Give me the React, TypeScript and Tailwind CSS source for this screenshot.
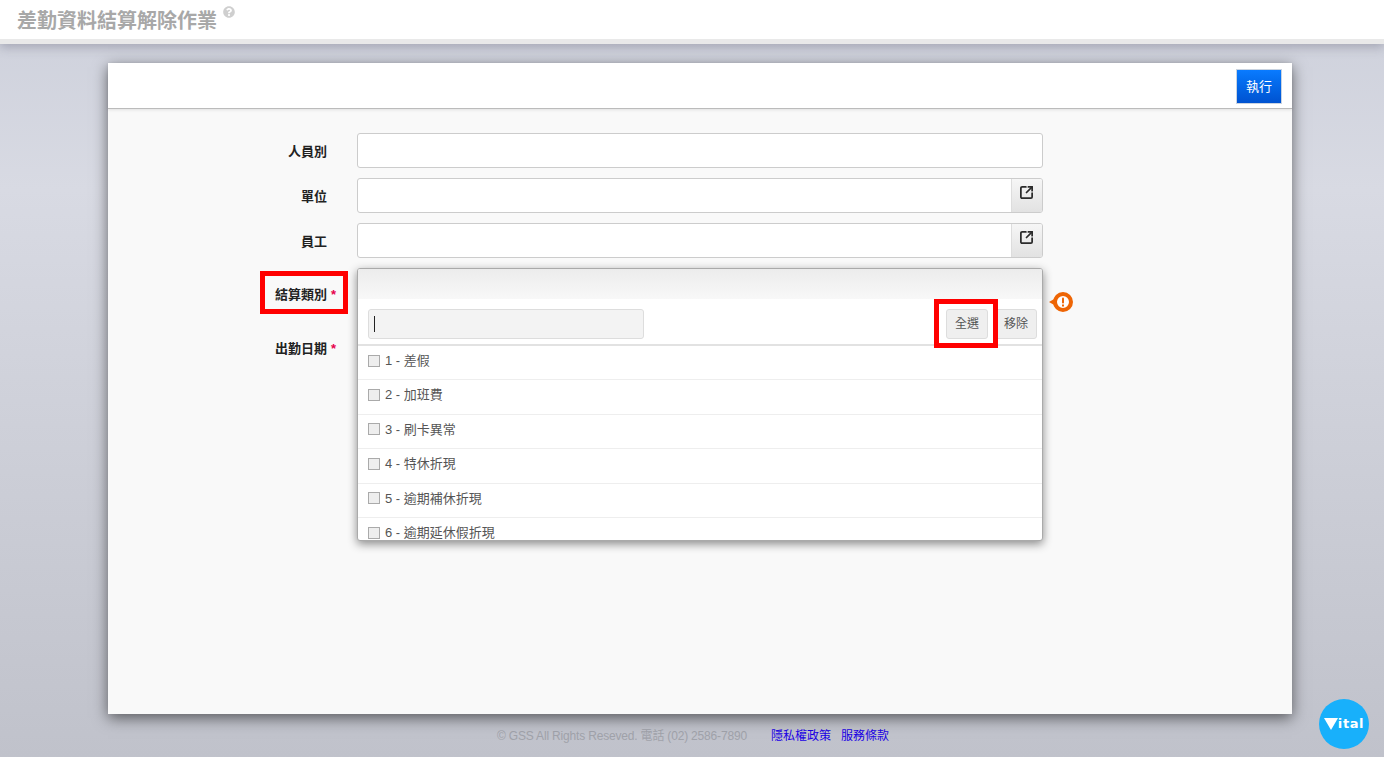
import { FaQuestionCircle } from "react-icons/fa";
import { SquareArrowOutUpRight } from "lucide-react";

const options = [
  "1 - 差假",
  "2 - 加班費",
  "3 - 刷卡異常",
  "4 - 特休折現",
  "5 - 逾期補休折現",
  "6 - 逾期延休假折現",
];

const FieldLabel = ({ text, required }: { text: string; required?: boolean }) => (
  <div className="w-[219px] shrink-0 pt-[2px] flex items-center justify-end text-[13px] font-bold text-[#222]">
    <span>{text}</span>
    {required && <span className="ml-1 -mr-[10px] w-[6px] text-[#e6004c]">*</span>}
  </div>
);

const LookupInput = () => (
  <div className="w-[686px] h-[35px] flex bg-white border border-[#ccc] rounded-[3px] overflow-hidden">
    <div className="flex-1" />
    <div className="w-[31px] flex justify-center pt-[6px] pr-[2px] bg-linear-to-b from-[#f6f6f6] to-[#e2e2e2] border-l border-[#ddd]">
      <SquareArrowOutUpRight size={15} strokeWidth={2.8} className="text-[#2b2b2b]" />
    </div>
  </div>
);

const App = () => {
  return (
    <div className="h-screen overflow-hidden flex flex-col bg-linear-to-b from-[#cdd0db] via-[#d8dae3] via-25% to-[#c0c2cb] font-['Liberation_Sans','Noto_Sans_CJK_TC',sans-serif]">
      {/* Page title */}
      <header className="h-[44px] shrink-0 bg-white border-b-[5px] border-[#e9e9e9] shadow-[0_3px_10px_rgba(80,80,100,0.35)] pl-[17px] flex items-start">
        <h1 className="mt-[8px] text-[20px] leading-[26px] font-bold text-[#a8a8a8]">差勤資料結算解除作業</h1>
        <FaQuestionCircle className="ml-[6px] mt-[6px] text-[#cfcfcf]" size={12} />
      </header>

      {/* Main card */}
      <main className="relative mt-[19px] ml-[108px] w-[1184px] h-[651px] shrink-0 bg-[#f9f9f9] shadow-[0_4px_14px_rgba(0,0,0,0.55)] flex flex-col">
        <div className="h-[46px] shrink-0 bg-white border-b border-[#bbb] shadow-[0_1px_3px_rgba(0,0,0,0.1)] flex items-start justify-end pt-[6px] pr-[10px]">
          <button className="w-[46px] h-[35px] bg-linear-to-b from-[#0a7bff] to-[#0052d0] border border-[#c9d3e0] text-white text-[13px]">
            執行
          </button>
        </div>

        <form className="pt-[24px] flex flex-col gap-[10px]">
          <div className="flex gap-[30px] h-[35px]">
            <FieldLabel text="人員別" />
            <div className="w-[686px] bg-white border border-[#ccc] rounded-[3px]" />
          </div>
          <div className="flex gap-[30px] h-[35px]">
            <FieldLabel text="單位" />
            <LookupInput />
          </div>
          <div className="flex gap-[30px] h-[35px]">
            <FieldLabel text="員工" />
            <LookupInput />
          </div>
          <div className="relative flex gap-[30px] h-[52px]">
            <FieldLabel text="結算類別" required />

            {/* Open multi-select dropdown */}
            <div className="absolute z-10 left-[249px] top-0 w-[686px] h-[273px] flex flex-col bg-white border border-[#aaa] rounded-[3px] shadow-[0_3px_10px_rgba(0,0,0,0.45)] overflow-hidden">
              <div className="h-[30px] shrink-0 bg-linear-to-b from-[#ececec] to-[#f8f8f8]" />
              <div className="h-[47px] shrink-0 flex items-center gap-[7px] pt-[4px] pl-[10px] pr-[5px] border-b-[2px] border-[#e2e2e2]">
                <div className="w-[276px] h-[30px] flex items-center pl-[5px] bg-[#f3f3f3] border border-[#ddd] rounded-[3px]">
                  <span className="w-px h-[16px] bg-[#222]" />
                </div>
                <div className="flex-1" />
                <button type="button" className="w-[42px] h-[30px] bg-[#efefef] border border-[#ddd] rounded-[3px] text-[12px] text-[#555]">全選</button>
                <button type="button" className="w-[42px] h-[30px] bg-[#efefef] border border-[#ddd] rounded-[3px] text-[12px] text-[#555]">移除</button>
              </div>
              <ul className="flex-1 overflow-hidden">
                {options.map((option) => (
                  <li key={option} className="h-[34.4px] pb-[4px] flex items-center gap-[5px] pl-[10px] border-b border-[#eee] text-[13px] text-[#555]">
                    <span className="w-[12px] h-[12px] bg-[#eee] border border-[#aaa]" />
                    {option}
                  </li>
                ))}
              </ul>
            </div>

            {/* Validation marker */}
            <svg className="absolute left-[940px] top-[23px]" width="26" height="22" viewBox="0 0 26 22">
              <path d="M1 11 L7 7.5 L7 14.5 Z" fill="#ee6505" />
              <circle cx="15" cy="11" r="8" fill="#fff" stroke="#ee6505" strokeWidth="4" />
              <rect x="14" y="6.5" width="2" height="6" rx="1" fill="#ee6505" />
              <rect x="14" y="13.5" width="2" height="2" fill="#ee6505" />
            </svg>
          </div>
          <div className="flex gap-[30px] h-[35px]">
            <FieldLabel text="出勤日期" required />
          </div>
        </form>

        {/* Annotation boxes */}
        <div className="absolute z-20 left-[152px] top-[208px] w-[88px] h-[43px] border-[5px] border-[#f00]" />
        <div className="absolute z-20 left-[826px] top-[236px] w-[64px] h-[49px] border-[5px] border-[#f00]" />
      </main>

      <footer className="mt-[14px] ml-[497px] flex text-[12px] leading-[16px]">
        <span className="text-[#a0a2aa] tracking-[-0.18px]">© GSS All Rights Reseved. 電話 (02) 2586-7890</span>
        <a className="ml-[24px] text-[#1a00e6]" href="#">隱私權政策</a>
        <a className="ml-[10px] text-[#1a00e6]" href="#">服務條款</a>
      </footer>

      {/* Vital chat launcher */}
      <div className="absolute left-[1319px] top-[699px] w-[50px] h-[50px] rounded-full bg-[#18b0fb] flex items-center justify-center text-white">
        <svg width="14" height="12" viewBox="0 0 14 12"><path d="M0 0 H14 L7 12 Z" fill="#fff" /></svg>
        <span className="text-[13px] font-bold font-['DejaVu_Sans',sans-serif] tracking-[0.6px]">ital</span>
      </div>
    </div>
  );
};

export default App;
